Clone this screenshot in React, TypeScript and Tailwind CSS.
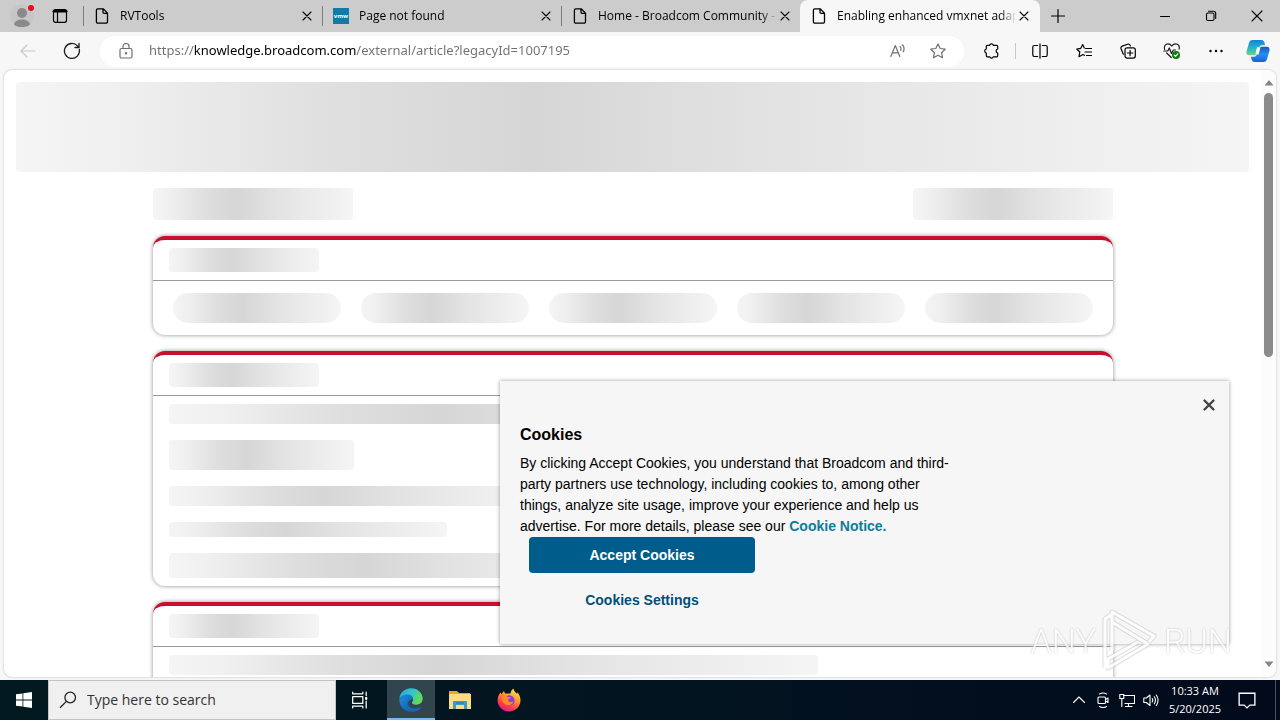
import React from "react";

const shade =
  "bg-[linear-gradient(90deg,#f5f5f5_0%,#f0f0f0_8%,#dedede_27%,#d6d6d6_42%,#e3e3e3_62%,#f5f5f5_100%)]";

function Bone({ className }: { className: string }) {
  return <div className={`${shade} ${className}`} />;
}

function Card({ children }: { children: React.ReactNode }) {
  return (
    <section className="rounded-xl border-t-4 border-[#c8102e] bg-white shadow-[0_0_4px_rgba(0,0,0,0.45)]">
      <div className="flex h-[41px] items-center border-b border-[#999999] px-4">
        <Bone className="h-6 w-[150px] rounded" />
      </div>
      {children}
    </section>
  );
}

function Icon({
  children,
  className = "size-4",
  width = 1.2,
}: {
  children: React.ReactNode;
  className?: string;
  width?: number;
}) {
  return (
    <svg
      viewBox="0 0 16 16"
      className={`shrink-0 ${className}`}
      fill="none"
      stroke="currentColor"
      strokeWidth={width}
      strokeLinecap="round"
      strokeLinejoin="round"
      aria-hidden="true"
    >
      {children}
    </svg>
  );
}

function PageIcon() {
  return (
    <Icon width={1.3}>
      <path d="M3.8.8h5.4l4.3 4.3v8.7a1.4 1.4 0 0 1-1.4 1.4H3.8a1.4 1.4 0 0 1-1.4-1.4V2.2A1.4 1.4 0 0 1 3.8.8ZM9 1v3.2a1.1 1.1 0 0 0 1.1 1.1h3.2" />
    </Icon>
  );
}

function VmwIcon() {
  return (
    <span className="flex size-4 shrink-0 items-center justify-center bg-[#0e7ca6] font-['Open_Sans',sans-serif] text-[6px] font-bold leading-none text-white">
      vmw
    </span>
  );
}

function Tab({
  title,
  icon,
  active,
}: {
  title: string;
  icon: React.ReactNode;
  active?: boolean;
}) {
  return (
    <div
      className={
        active
          ? "flex h-full min-w-0 max-w-60 flex-1 items-center rounded-t-lg bg-[#f7f7f7] pr-2"
          : "flex h-full min-w-0 max-w-[239px] flex-1 items-center pr-[7px]"
      }
    >
      <span className={active ? "w-px" : "h-5 w-px bg-[#7c7c7c]"} />
      <button role="tab" aria-selected={!!active} className="flex h-full min-w-0 flex-1 items-center pl-2.5 text-left">
        {icon}
        <span className="ml-2.5 min-w-0 flex-1 overflow-hidden whitespace-nowrap [mask-image:linear-gradient(90deg,#000_calc(100%-16px),transparent)]">
          {title}
        </span>
      </button>
      <button aria-label={`Close ${title}`} className="flex size-4 items-center justify-center">
        <Icon className="size-4" width={1.1}>
          <path d="M4 4l8 8M12 4l-8 8" />
        </Icon>
      </button>
    </div>
  );
}

function ToolButton({ label, children }: { label: string; children: React.ReactNode }) {
  return (
    <button aria-label={label} className="flex h-full w-11 shrink-0 items-center justify-center">
      {children}
    </button>
  );
}

function WindowButton({ label, children }: { label: string; children: React.ReactNode }) {
  return (
    <button aria-label={label} className="flex h-full w-[46px] items-center justify-center">
      <Icon width={1.1}>{children}</Icon>
    </button>
  );
}

function TabStrip() {
  return (
    <header className="flex h-8 shrink-0 items-center bg-[#cccccc]">
      <div className="flex h-full w-[83px] shrink-0 items-center">
        <button aria-label="Profile" className="flex h-full w-11 items-center justify-center">
          <svg viewBox="0 0 24 24" className="size-6" aria-hidden="true">
            <circle cx="12" cy="12" r="11.500" fill="#c6c6c6" />
            <circle cx="12" cy="9" r="5" fill="#8a8a8a" />
            <path d="M4 20.500C4.500 17 8 15.500 12 15.500s7.500 1.500 8 5c-2 2-5 2.500-8 2.500s-6-.5-8-2.500Z" fill="#8a8a8a" />
            <circle cx="21" cy="4" r="3" fill="#e3101c" />
          </svg>
        </button>
        <button aria-label="Tab actions" className="flex h-full w-8 items-center justify-center">
          <Icon width={1.2}>
            <rect x="1.500" y="1.700" width="13" height="12.600" rx="2" />
            <path d="M2 3.200h12" strokeWidth="2.800" />
            <path d="M5.500 4v10" />
          </Icon>
        </button>
      </div>
      <div role="tablist" className="flex h-full min-w-0 max-w-[957px] flex-1">
        <Tab title="RVTools" icon={<PageIcon />} />
        <Tab title="Page not found" icon={<VmwIcon />} />
        <Tab title="Home - Broadcom Community - " icon={<PageIcon />} />
        <Tab title="Enabling enhanced vmxnet adap" icon={<PageIcon />} active />
      </div>
      <button aria-label="New tab" className="flex h-full w-9 items-center justify-center">
        <Icon>
          <path d="M8 1.500v13M1.500 8h13" />
        </Icon>
      </button>
      <div className="ml-auto flex h-full">
        <WindowButton label="Minimize">
          <path d="M3.500 8.500h9" />
        </WindowButton>
        <WindowButton label="Restore">
          <rect x="3.500" y="5" width="7.500" height="7.500" rx="1.500" />
          <path d="M5.500 3.200h5a2.200 2.200 0 0 1 2.200 2.200v5" />
        </WindowButton>
        <WindowButton label="Close">
          <path d="M3 3l10 10M13 3L3 13" />
        </WindowButton>
      </div>
    </header>
  );
}

function Toolbar() {
  return (
    <nav className="flex h-[38px] shrink-0 items-center bg-[#f7f7f7] pl-1.5 pr-0.5">
      <button aria-label="Back" disabled className="flex h-full w-11 items-center justify-center text-[#c8c8c8]">
        <Icon>
          <path d="M15 8H1M7 2L1 8l6 6" />
        </Icon>
      </button>
      <ToolButton label="Refresh">
        <svg viewBox="0 0 18 18" className="size-[18px]" fill="none" stroke="#1a1a1a" strokeWidth="1.300" strokeLinecap="round" aria-hidden="true">
          <path d="M16.300 7.500A7.500 7.500 0 1 1 14.500 3.900L16 5.500M16 1.500v4h-4" />
        </svg>
      </ToolButton>
      <div className="ml-1.5 flex h-[31px] min-w-0 flex-1 items-center rounded-full bg-white pl-[18px] text-[#707070]">
        <Icon>
          <rect x="2" y="5.500" width="12" height="9.500" rx="1.500" />
          <path d="M5 5.500V3.500a3 3 0 0 1 6 0v2" />
          <circle cx="8" cy="10.300" r=".6" fill="currentColor" />
        </Icon>
        <input
          aria-label="Address and search bar"
          defaultValue="https://knowledge.broadcom.com/external/article?legacyId=1007195"
          className="ml-[15px] min-w-0 flex-1 bg-[linear-gradient(90deg,#707070_45px,#000_45px,#000_207px,#707070_207px)] bg-clip-text font-['Noto_Sans',sans-serif] text-[13px] text-transparent outline-none"
        />
        <button aria-label="Read aloud" className="flex h-full w-10 items-center justify-center">
          <Icon>
            <path d="M.8 13.500L5.300 2.500l4.500 11M2.300 9.800h6M10 3.500q1.700 1.600.8 4M12.200 1.800q3 2.700 1.200 7" />
          </Icon>
        </button>
        <button aria-label="Add to favorites" className="mr-1.5 flex h-full w-10 items-center justify-center">
          <Icon>
            <path d="M8 .9l2.200 4.600 5 .7-3.600 3.500.9 5L8 12.300l-4.500 2.400.9-5L.8 6.200l5-.7Z" />
          </Icon>
        </button>
      </div>
      <div className="ml-[5px] flex h-full items-center">
        <ToolButton label="Extensions">
          <Icon>
            <path d="M4.300 2.300h2.300a2 2 0 0 1 3.800 0h3.300a1 1 0 0 1 1 1v2.600a2.200 2.200 0 0 0 0 4.200v2.700a1 1 0 0 1-1 1h-3.300a2 2 0 0 1-3.800 0H4.300a1 1 0 0 1-1-1V10.100a2.200 2.200 0 0 1 0-4.200V3.300a1 1 0 0 1 1-1Z" />
          </Icon>
        </ToolButton>
        <span className="mx-0.5 h-4 w-px bg-[#c8c8c8]" />
        <ToolButton label="Split screen">
          <Icon>
            <path d="M8 .8v14.400M5.700 2.500H2.200A1.400 1.400 0 0 0 .8 3.900v8.200a1.400 1.400 0 0 0 1.400 1.400h3.500M10.300 2.500h3.500a1.400 1.400 0 0 1 1.400 1.400v8.200a1.400 1.400 0 0 1-1.400 1.400h-3.500" />
          </Icon>
        </ToolButton>
        <ToolButton label="Favorites">
          <Icon>
            <path d="M8.300 5L6.700 1.500 4.800 5.300.8 6l3 3-.8 4.700 4-2.200 1.500.8M9.500 5.500h6M9 9h6.500M10.500 12.500h5" />
          </Icon>
        </ToolButton>
        <ToolButton label="Collections">
          <Icon>
            <rect x="5" y="4.800" width="10.300" height="10.300" rx="2" />
            <path d="M10.100 7.300v5.400M7.400 10h5.400M3.300 11.300L1 5.500a2 2 0 0 1 1.200-2.400L7.500 1.200a2 2 0 0 1 2.600 1.200l.2.600" />
          </Icon>
        </ToolButton>
        <ToolButton label="Browser essentials">
          <svg viewBox="0 0 18 18" className="size-[18px]" fill="none" stroke="#1a1a1a" strokeWidth="1.200" strokeLinecap="round" strokeLinejoin="round" aria-hidden="true">
            <path d="M1.600 7.500C.5 4.500 2.500 1.800 5 1.800c1.800 0 2.800.9 3.800 2.200 1-1.300 2-2.200 3.800-2.200 2.700 0 4.400 2.600 3.500 5.300M3.700 11l4.600 4.500M.8 9h4l1.500-3 2.200 5.500L10.300 8h2.200" />
            <circle cx="13" cy="13" r="4" fill="#107c10" stroke="none" />
            <path d="M11.300 13.200l1.200 1.200 2.300-2.600" stroke="#fff" />
          </svg>
        </ToolButton>
        <ToolButton label="Settings and more">
          <Icon>
            <g fill="currentColor" stroke="none">
              <circle cx="2.500" cy="8" r="1.200" />
              <circle cx="8" cy="8" r="1.200" />
              <circle cx="13.500" cy="8" r="1.200" />
            </g>
          </Icon>
        </ToolButton>
        <button aria-label="Copilot" className="flex h-full w-10 items-center justify-center">
          <svg viewBox="0 0 24 24" className="size-6" aria-hidden="true">
            <defs>
              <linearGradient id="copA" x1="0" y1="0" x2="0" y2="1">
                <stop offset="0" stopColor="#1a7fd6" />
                <stop offset=".5" stopColor="#21b5c9" />
                <stop offset="1" stopColor="#6fd67a" />
              </linearGradient>
              <linearGradient id="copB" x1="0" y1="0" x2="0" y2="1">
                <stop offset="0" stopColor="#1b56b8" />
                <stop offset=".5" stopColor="#2290ee" />
                <stop offset="1" stopColor="#1463dd" />
              </linearGradient>
            </defs>
            <path d="M6.500 1h9c1.700 0 2.400 1 2.900 2.500l.7 2.800h-3.300c-1.300 0-2 .8-2.400 2l-1.800 5.700c-.5 1.500-1.300 2.300-2.900 2.300H3C.8 16.300 0 14.500.6 12.300L3 4C3.500 2 4.600 1 6.500 1Z" fill="url(#copA)" />
            <path d="M17.500 23h-9c-1.700 0-2.400-1-2.900-2.500l-.7-2.800h3.300c1.300 0 2-.8 2.400-2L12.400 10c.5-1.500 1.300-2.300 2.900-2.300H21c2.200 0 3 1.800 2.400 4L21 20c-.5 2-1.600 3-3.500 3Z" fill="url(#copB)" />
            <path d="M11 8.200h3.500l-2 7.300H9.400Z" fill="#fff" />
          </svg>
        </button>
      </div>
    </nav>
  );
}

function CookieDialog() {
  return (
    <div
      role="dialog"
      aria-label="Cookies"
      className="absolute bottom-[33px] right-[47px] w-[729px] max-w-full bg-[#f6f6f6] px-5 pb-[26px] pt-11 font-['Liberation_Sans',sans-serif] text-sm text-black shadow-[0_0_4px_rgba(0,0,0,0.4)]"
    >
      <button aria-label="Close" className="absolute right-3 top-4 flex size-4 items-center justify-center text-[#444444]">
        <Icon width={2.4}>
          <path d="M3.500 3.500l9 9M12.500 3.500l-9 9" />
        </Icon>
      </button>
      <h2 className="text-base font-bold leading-5">Cookies</h2>
      <p className="mt-2 max-w-[440px] leading-[21px]">
        By clicking Accept Cookies, you understand that Broadcom and third-party partners use technology, including
        cookies to, among other things, analyze site usage, improve your experience and help us advertise. For more
        details, please see our{" "}
        <a href="#cookie-notice" className="font-bold text-[#0e7c9c]">
          Cookie Notice.
        </a>
      </p>
      <div className="ml-[9px] flex w-[226px] flex-col gap-[9px]">
        <button className="h-9 rounded bg-[#005c8a] font-bold text-white">Accept Cookies</button>
        <button className="h-9 font-bold text-[#005079]">Cookies Settings</button>
      </div>
    </div>
  );
}

function Watermark() {
  const word =
    "font-['Roboto',sans-serif] text-[34px] font-light leading-none text-white [text-shadow:0_0_2px_#a8a8a8]";
  return (
    <div className="pointer-events-none absolute bottom-0.5 right-11 flex h-[68px] items-center gap-1 opacity-80">
      <span className={word}>ANY</span>
      <svg viewBox="0 0 60 66" className="h-[66px] w-[60px]" fill="none" strokeLinejoin="round" aria-hidden="true">
        <g stroke="#c4c4c4" strokeWidth="5" opacity=".7">
          <path d="M5 60V11l6-4M12 43V4l42 24-5 6M12 14l36 22L8 60v-9l30-17" />
        </g>
        <g stroke="#ffffff" strokeWidth="3">
          <path d="M5 60V11l6-4M12 43V4l42 24-5 6M12 14l36 22L8 60v-9l30-17" />
        </g>
      </svg>
      <span className={word}>RUN</span>
    </div>
  );
}

function Page() {
  return (
    <div className="relative mx-1 mb-[3px] flex min-h-0 flex-1 overflow-hidden rounded-lg bg-white shadow-[0_0_2px_rgba(0,0,0,0.3)]">
      <main className="min-w-0 flex-1 overflow-hidden px-3 pt-3">
        <Bone className="h-[90px] rounded" />
        <div className="mx-auto mt-4 flex max-w-[960px] flex-col gap-4">
          <div className="flex justify-between">
            <Bone className="h-8 w-[200px] rounded" />
            <Bone className="h-8 w-[200px] rounded" />
          </div>
          <Card>
            <div className="grid grid-cols-5 gap-5 px-5 py-3">
              <Bone className="h-[30px] rounded-full" />
              <Bone className="h-[30px] rounded-full" />
              <Bone className="h-[30px] rounded-full" />
              <Bone className="h-[30px] rounded-full" />
              <Bone className="h-[30px] rounded-full" />
            </div>
          </Card>
          <Card>
            <div className="flex flex-col gap-4 px-4 py-2">
              <Bone className="h-5 w-[70%] rounded" />
              <Bone className="h-[30px] w-[20%] rounded" />
              <Bone className="h-5 w-[40%] rounded" />
              <Bone className="h-[15px] w-[30%] rounded" />
              <Bone className="h-[25px] w-[50%] rounded" />
            </div>
          </Card>
          <Card>
            <div className="flex flex-col gap-4 px-4 py-2">
              <Bone className="h-5 w-[70%] rounded" />
              <Bone className="h-[30px] w-[20%] rounded" />
            </div>
          </Card>
        </div>
      </main>
      <div className="flex w-[15px] shrink-0 flex-col items-center bg-[#fcfcfc] py-2.5">
        <svg viewBox="0 0 10 6" className="h-1.5 w-2.5" fill="#858585" aria-hidden="true">
          <path d="M5 0l4.500 5.500h-9Z" />
        </svg>
        <div className="mt-[7px] h-[45%] w-[9px] rounded-full bg-[#8b8b8b]" />
        <svg viewBox="0 0 10 6" className="mt-auto h-1.5 w-2.5" fill="#858585" aria-hidden="true">
          <path d="M5 6L.5.5h9Z" />
        </svg>
      </div>
      <CookieDialog />
      <Watermark />
    </div>
  );
}

function TaskButton({ label, active, children }: { label: string; active?: boolean; children: React.ReactNode }) {
  return (
    <button
      aria-label={label}
      className={
        active
          ? "flex h-full w-12 items-center justify-center border-b-2 border-[#76b9ed] bg-[#31454d] pt-0.5"
          : "flex h-full w-12 items-center justify-center"
      }
    >
      {children}
    </button>
  );
}

function TrayButton({ label, children }: { label: string; children: React.ReactNode }) {
  return (
    <button aria-label={label} className="flex h-full w-6 items-center justify-center">
      <Icon width={1.1}>{children}</Icon>
    </button>
  );
}

function Taskbar() {
  return (
    <footer className="flex h-10 shrink-0 items-center bg-[linear-gradient(90deg,#02191f,#021420_50%,#020a1c)] text-white">
      <TaskButton label="Start">
        <svg viewBox="0 0 16 16" className="size-4" fill="#fff" aria-hidden="true">
          <path d="M0 2.300l6.500-.9v6.200H0ZM7.300 1.300L16 0v7.600H7.300ZM0 8.400h6.500v6.200L0 13.700ZM7.300 8.400H16V16l-8.700-1.300Z" />
        </svg>
      </TaskButton>
      <label className="flex h-full w-72 items-center border border-[#c4c4c4] bg-[#f0f0f0] pl-2.5 text-[#222222]">
        <svg viewBox="0 0 18 18" className="size-[18px]" fill="none" stroke="#222" strokeWidth="1.300" aria-hidden="true">
          <circle cx="11.200" cy="6.500" r="5.300" />
          <path d="M7.400 10.400L1 16.800" />
        </svg>
        <input
          aria-label="Search"
          placeholder="Type here to search"
          className="ml-2.5 min-w-0 flex-1 bg-transparent text-sm outline-none placeholder:text-[#333333]"
        />
      </label>
      <TaskButton label="Task view">
        <Icon className="size-[18px]" width={1.1}>
          <path d="M1.500 1v1.500h9V1M1.500 15v-1.500h9V15M1.500 5h9v6h-9ZM13.500 1v3M13.500 9v6" />
          <path d="M13.500 6v1" strokeWidth="2" />
        </Icon>
      </TaskButton>
      <div className="ml-[3px] flex h-full gap-px">
        <TaskButton label="Microsoft Edge" active>
          <svg viewBox="0 0 24 24" className="size-6" aria-hidden="true">
            <defs>
              <linearGradient id="edgeTop" x1="0" y1="0" x2="1" y2=".4">
                <stop offset="0" stopColor="#2ba4e0" />
                <stop offset=".55" stopColor="#32c6cc" />
                <stop offset="1" stopColor="#64d957" />
              </linearGradient>
              <linearGradient id="edgeLow" x1="0" y1="0" x2="1" y2="1">
                <stop offset="0" stopColor="#1b8edb" />
                <stop offset="1" stopColor="#1259a8" />
              </linearGradient>
            </defs>
            <path d="M.3 10.500C1.200 4.500 6 .3 12 .3c6.700 0 11.700 5 11.700 10.200 0 3.800-2.900 6.200-6.300 6.200-2.900 0-4.400-1-4.400-2 0-.7 1.100-1.100 1.100-3.100C14.100 9 11.500 7 8.300 7 4.800 7 2 8.500.3 10.500Z" fill="url(#edgeTop)" />
            <path d="M.3 12C.4 8.800 4 6.500 8.300 6.500c3.300 0 5.800 2 5.800 4.700-4 .2-6 3.300-5 6.800.9 3 3.800 4.700 6.700 5.400C8 25.500.2 19.500.3 12Z" fill="url(#edgeLow)" />
            <path d="M9.100 12.500c-1.500 4 1.500 8 6.500 8 2.500 0 4.400-.8 6-1.700.4-.2.8.2.5.6-1.500 2.300-4 3.900-7 4.200-7-.5-9.500-7.500-6-11.100Z" fill="#1769b8" />
          </svg>
        </TaskButton>
        <TaskButton label="File Explorer">
          <svg viewBox="0 0 24 20" className="h-5 w-6" aria-hidden="true">
            <path d="M1 1h8l2 2h11v16H1Z" fill="#e8a52b" />
            <path d="M1 4h22v15H1Z" fill="#fcdc7c" />
            <path d="M5 11h14v8h-3v-4H8v4H5Z" fill="#3f97d3" />
            <path d="M8 13h8" stroke="#2675b0" />
          </svg>
        </TaskButton>
        <TaskButton label="Firefox">
          <svg viewBox="0 0 24 24" className="size-6" aria-hidden="true">
            <defs>
              <linearGradient id="fox" x1=".8" y1="0" x2=".3" y2="1">
                <stop offset="0" stopColor="#fff14a" />
                <stop offset=".4" stopColor="#ff9a2a" />
                <stop offset=".75" stopColor="#ff3a4e" />
                <stop offset="1" stopColor="#e31587" />
              </linearGradient>
            </defs>
            <path d="M3.500 4.200c.2 1 .6 1.600 1 2L7 2.700c.1 1.200.6 2.200 1.500 2.900h5C13.700 3.400 15 1.500 16.500.5c.3 2.500 2 3.700 3.500 5.300.3-.5.2-1.200 0-1.800 2.200 2.200 3.500 5.300 3.500 8.300C23.500 18.500 18.500 23.500 12 23.500S.6 18.500.6 12.500C.6 9 1.800 6.500 3.500 4.200Z" fill="url(#fox)" />
            <circle cx="12.300" cy="12.500" r="5.300" fill="#8b3fdc" />
            <path d="M5 8.500c2.500-1.400 4.500-.6 6 .8h3c-.6 1.600-2.700 1.600-3 2.700.3 2 3 3 5.300 1.500-1 3.300-4 4.500-6.800 3.500C6.200 15.800 4.500 12.500 5 8.500Z" fill="#ff8a24" />
          </svg>
        </TaskButton>
      </div>
      <div className="ml-auto flex h-full items-center">
        <TrayButton label="Show hidden icons">
          <path d="M2.500 10.500L8 5l5.500 5.500" />
        </TrayButton>
        <TrayButton label="Meet now">
          <rect x="3" y="5" width="7.500" height="6.500" rx="1" />
          <path d="M10.500 7.500L13 6v4.500l-2.500-1.500M4.500 2Q8 0 11.500 2M4.500 14.500q3.500 2 7 0" />
        </TrayButton>
        <TrayButton label="Network">
          <path d="M4.500 3.500h11v8H6M9.500 11.500v3M6.500 14.500h6.500M.8 2.500h4v4h-4ZM2.800 6.500v8" />
        </TrayButton>
        <TrayButton label="Volume">
          <path d="M.8 6v4.500h2.500L7 13.500V3L3.300 6ZM9.200 6.500q1.200 1.700 0 3.500M11.300 4.800q2.300 3.300 0 7M13.300 3q3.500 5 0 10.500" />
        </TrayButton>
        <button className="w-16 text-center text-[11px] leading-[18px]">
          <span className="block">10:33 AM</span>
          <span className="block">5/20/2025</span>
        </button>
        <button aria-label="Notifications" className="flex h-full w-10 items-center justify-center">
          <Icon className="size-[18px]">
            <path d="M1 2h14v10.500h-4.500L8 15l-2.500-2.500H1Z" strokeLinejoin="miter" />
          </Icon>
        </button>
        <span className="ml-2 mr-1 h-full w-px bg-[#4a5360]" />
      </div>
    </footer>
  );
}

export default function App() {
  return (
    <div className="flex h-screen flex-col overflow-hidden bg-[#f7f7f7] font-['Open_Sans',sans-serif] text-xs text-black">
      <TabStrip />
      <Toolbar />
      <Page />
      <Taskbar />
    </div>
  );
}
